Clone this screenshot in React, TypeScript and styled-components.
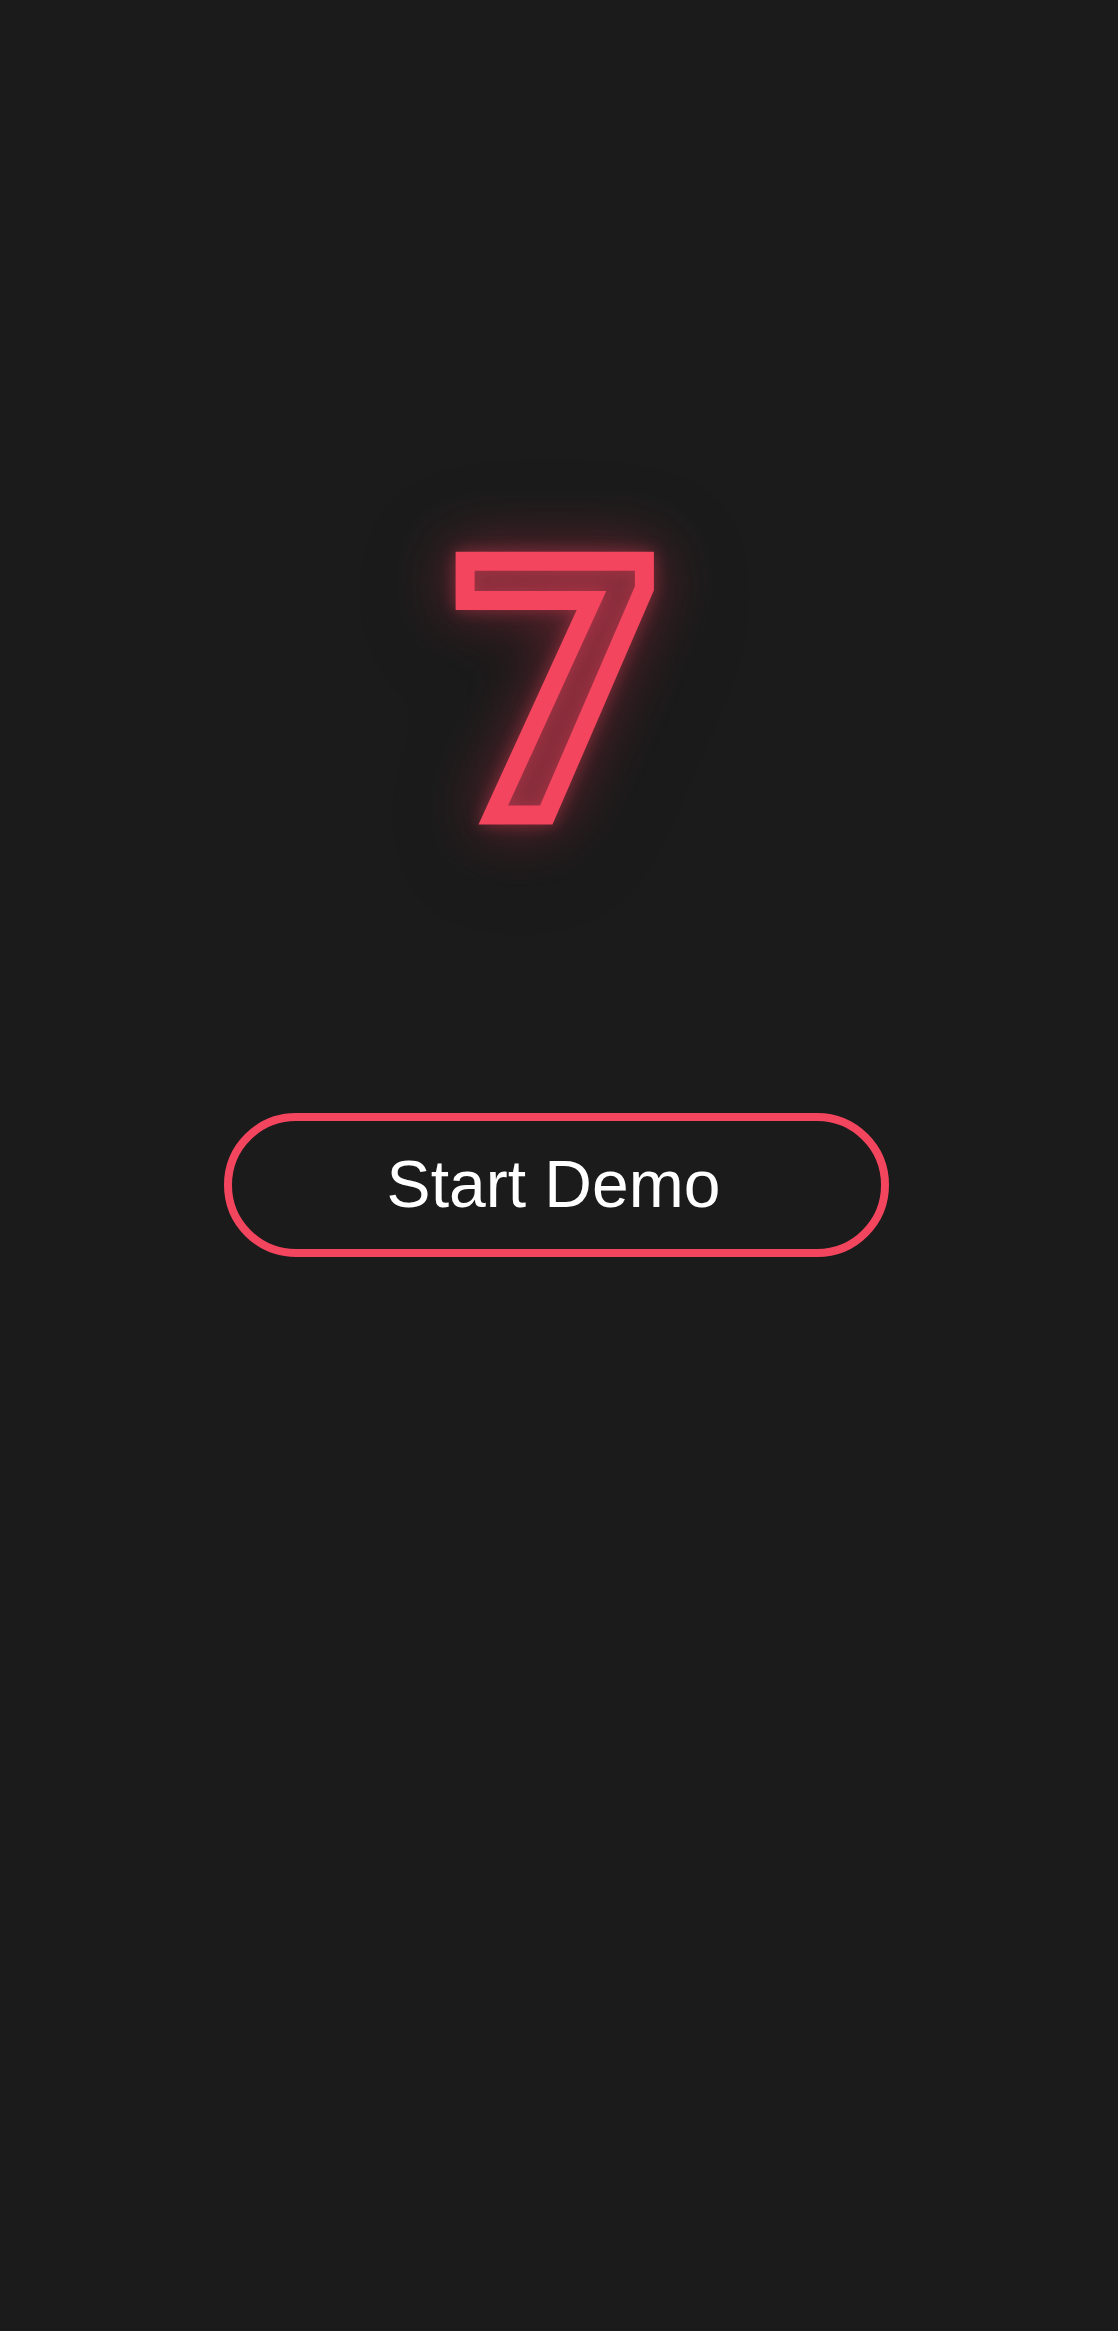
import React from "react";
import styled, { createGlobalStyle } from "styled-components";

const GlobalStyle = createGlobalStyle`
  html, body {
    margin: 0;
    padding: 0;
    background: #1b1b1b;
  }
  * { box-sizing: border-box; }
`;

const Page = styled.main`
  min-height: 2331px;
  display: flex;
  flex-direction: column;
  align-items: center;
  padding-top: 515px;
  background: #1b1b1b;
`;

const NeonDigit = styled.div`
  font-family: Roboto, Inter, "Liberation Sans", sans-serif;
  font-weight: 700;
  font-size: 357px;
  line-height: 1;
  height: 350px;
  margin-right: 4px;
  color: rgba(244, 68, 96, 0.26);
  -webkit-text-stroke: 19px #f4455f;
  filter: drop-shadow(0 0 8px rgba(244, 68, 96, 0.4))
    drop-shadow(0 0 30px rgba(244, 68, 96, 0.5))
    drop-shadow(0 12px 40px rgba(0, 0, 0, 0.4));
  user-select: none;
`;

const StartButton = styled.button`
  margin-top: 248px;
  margin-right: 5px;
  width: 665px;
  height: 144px;
  border: 8.5px solid #f4455f;
  border-radius: 72px;
  background: transparent;
  color: #ffffff;
  font-family: "Liberation Sans", Arial, Helvetica, sans-serif;
  font-size: 66px;
  font-weight: 400;
  display: flex;
  align-items: center;
  justify-content: center;
  cursor: pointer;
  padding: 0 6px 3px 0;
`;

export default function App() {
  return (
    <>
      <GlobalStyle />
      <Page>
        <NeonDigit>7</NeonDigit>
        <StartButton>Start Demo</StartButton>
      </Page>
    </>
  );
}
